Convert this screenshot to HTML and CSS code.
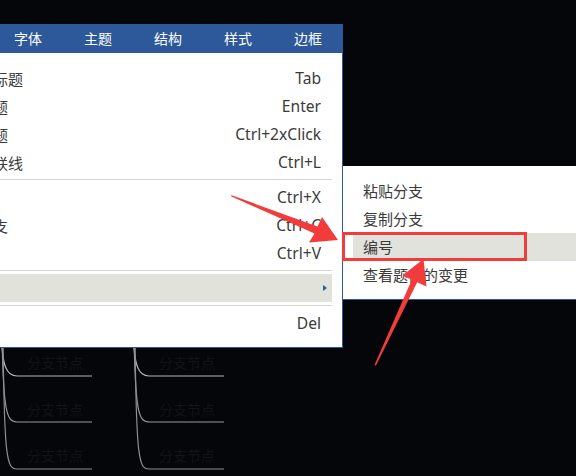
FILE: index.html
```html
<!DOCTYPE html>
<html lang="zh-CN">
<head>
<meta charset="utf-8">
<title>菜单</title>
<link rel="stylesheet" href="styles.css">
</head>
<body>
<div class="screen">
  <svg class="mindmap" width="576" height="476" viewBox="0 0 576 476">
    <g class="branch" fill="none" stroke-width="1.2">
      <path d="M1 330 C2 368 7 376 17 376 L92 376" stroke="#b4b4b4"/>
      <path d="M2 330 C3 414 7 422 17 422 L92 422" stroke="#9a9a9a"/>
      <path d="M3 330 C4 461 7 469 17 469 L92 469" stroke="#8e8e8e"/>
      <path d="M133 330 C134 368 139 376 149 376 L224 376" stroke="#b4b4b4"/>
      <path d="M134 330 C135 414 139 422 149 422 L224 422" stroke="#9a9a9a"/>
      <path d="M135 330 C136 461 139 469 149 469 L224 469" stroke="#8e8e8e"/>
    </g>
    <g class="node-text">
      <text x="27" y="368">分支节点</text>
      <text x="27" y="415">分支节点</text>
      <text x="27" y="461">分支节点</text>
      <text x="159" y="368">分支节点</text>
      <text x="159" y="415">分支节点</text>
      <text x="159" y="461">分支节点</text>
    </g>
  </svg>

  <div class="menu">
    <div class="tabs">
      <span class="tab">开始</span>
      <span class="tab">字体</span>
      <span class="tab">主题</span>
      <span class="tab">结构</span>
      <span class="tab">样式</span>
      <span class="tab">边框</span>
    </div>
    <div class="menu-body">
      <div class="item"><span class="label">插入子标题</span><span class="key">Tab</span></div>
      <div class="item"><span class="label">插入主题</span><span class="key">Enter</span></div>
      <div class="item"><span class="label">编辑主题</span><span class="key">Ctrl+2xClick</span></div>
      <div class="item"><span class="label">插入关联线</span><span class="key">Ctrl+L</span></div>
      <div class="sep"></div>
      <div class="item"><span class="label">剪切</span><span class="key">Ctrl+X</span></div>
      <div class="item"><span class="label">复制分支</span><span class="key">Ctrl+C</span></div>
      <div class="item"><span class="label">粘贴</span><span class="key">Ctrl+V</span></div>
      <div class="sep"></div>
      <div class="item active"><span class="label">更多</span><span class="caret"></span></div>
      <div class="sep"></div>
      <div class="item"><span class="label">删除</span><span class="key">Del</span></div>
    </div>
  </div>

  <div class="submenu">
    <div class="sub-item">粘贴分支</div>
    <div class="sub-item">复制分支</div>
    <div class="sub-item active">编号</div>
    <div class="sub-item">查看题目的变更</div>
  </div>

  <div class="mark-box"></div>

  <svg class="arrows" width="576" height="476" viewBox="0 0 576 476">
    <polygon class="arrow" points="231,195 317.5,226.5 322,217 338,240 309,242.5 314.5,233.5 231.5,196.5"/>
    <polygon class="arrow" points="374.5,365 411.8,279.7 402.5,275.5 423.5,259 426.5,286.5 417.2,282.3 376,365.5"/>
  </svg>
</div>
</body>
</html>
```

FILE: styles.css
```css
* { box-sizing: border-box; }

html, body {
  margin: 0;
  padding: 0;
  background: #05060a;
}

.screen {
  position: relative;
  width: 576px;
  height: 476px;
  overflow: hidden;
  background: #05060a;
  font-family: "Noto Sans", "Noto Sans CJK SC", sans-serif;
}

.mindmap {
  position: absolute;
  left: 0;
  top: 0;
}

.node-text text {
  font-family: "Noto Sans CJK SC", sans-serif;
  font-size: 14px;
  fill: #121316;
}

.menu {
  position: absolute;
  left: -70px;
  top: 24px;
  width: 413px;
}

.tabs {
  display: flex;
  height: 29px;
  background: #2d589a;
}

.tab {
  width: 70px;
  padding-left: 14px;
  flex: none;
  color: #ffffff;
  font-family: "Noto Sans CJK SC", sans-serif;
  font-size: 14px;
  line-height: 29px;
  white-space: nowrap;
}

.menu-body {
  background: #ffffff;
  border-right: 1px solid #2d589a;
  border-bottom: 1px solid #2d589a;
  padding: 11px 0 10px;
}

.item {
  position: relative;
  display: flex;
  justify-content: space-between;
  align-items: center;
  height: 28px;
  margin-right: 10px;
  padding: 0 11px 0 18px;
  font-size: 15.6px;
  color: #3a3a3a;
  white-space: nowrap;
}

.item.active {
  background: #e2e2dc;
}

.label {
  font-family: "Noto Sans CJK SC", sans-serif;
  font-size: 15px;
}

.caret {
  position: absolute;
  right: 5px;
  top: 11px;
  width: 0;
  height: 0;
  border-left: 4px solid #2d589a;
  border-top: 3px solid transparent;
  border-bottom: 3px solid transparent;
}

.sep {
  height: 1px;
  margin: 3px 10px 3px 0;
  background: #d6d6ce;
}

.submenu {
  position: absolute;
  left: 342px;
  top: 166px;
  width: 250px;
  background: #ffffff;
  border-left: 1px solid #2d589a;
  border-bottom: 1px solid #2d589a;
  padding: 11px 0 10px;
}

.sub-item {
  height: 28px;
  line-height: 28px;
  margin-left: 10px;
  padding-left: 10px;
  font-family: "Noto Sans CJK SC", sans-serif;
  font-size: 15px;
  color: #3a3a3a;
  white-space: nowrap;
}

.sub-item.active {
  background: #e2e2dc;
}

.mark-box {
  position: absolute;
  left: 342px;
  top: 232px;
  width: 185px;
  height: 29px;
  border: 3px solid #f23b3b;
}

.arrows {
  position: absolute;
  left: 0;
  top: 0;
  pointer-events: none;
}

.arrow {
  fill: #f23b3b;
}
```
